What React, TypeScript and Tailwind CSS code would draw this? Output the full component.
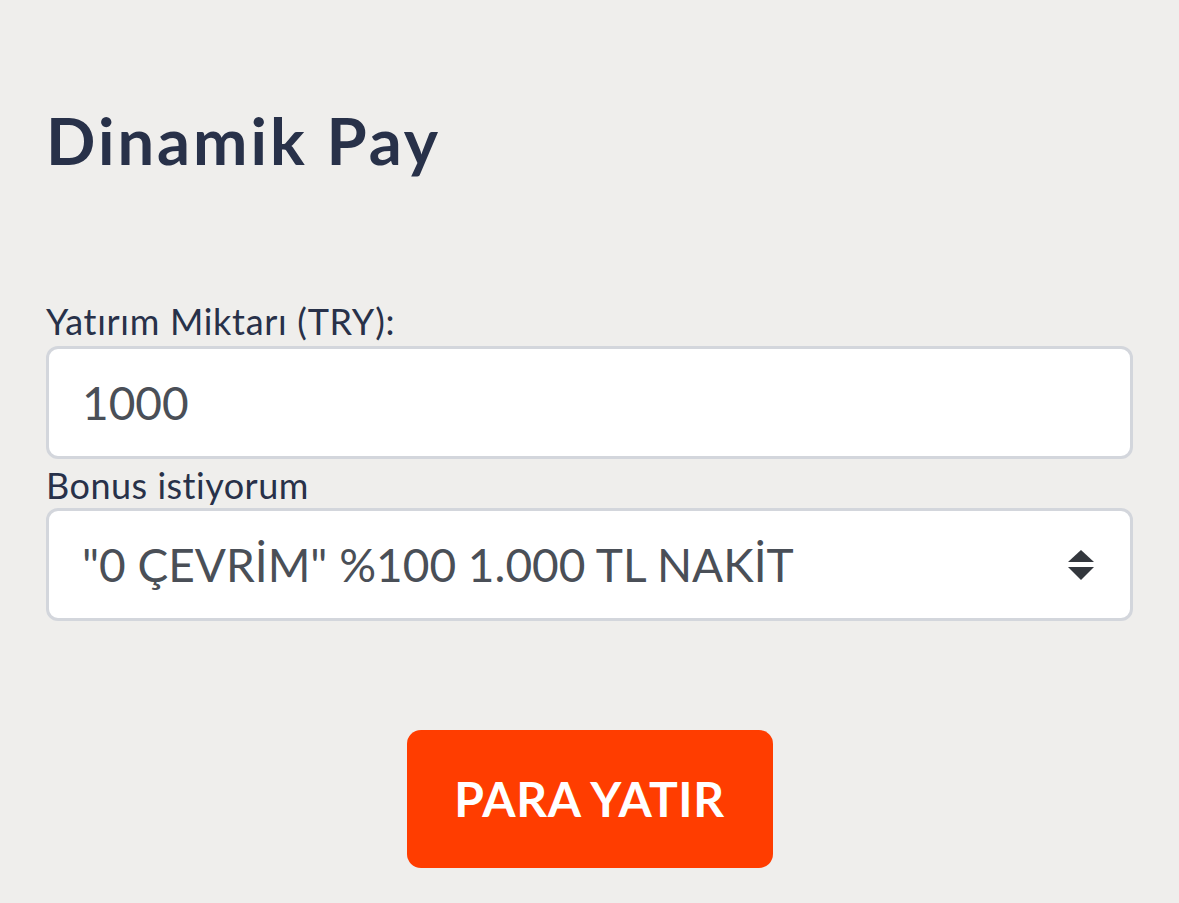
import React from 'react';

export default function App() {
  return (
    <div
      className="min-h-[903px] w-full bg-[#efeeec] px-[46px] pt-[100px] text-[#283149]"
      style={{ fontFamily: 'Lato, "Open Sans", sans-serif' }}
    >
      <h1 className="text-[65px] font-bold leading-[80px] tracking-[3px]">Dinamik Pay</h1>

      <form className="mt-[119px] flex flex-col">
        <label className="text-[36px] leading-[44px] tracking-[0.7px]">Yatırım Miktarı (TRY):</label>
        <div className="mt-[3px] flex h-[113px] items-center rounded-[12px] border-[3px] border-[#d3d6dc] bg-white px-[33px]">
          <span className="text-[46px] text-[#4a4f57]">1000</span>
        </div>

        <label className="mt-[5px] text-[36px] leading-[42px] tracking-[0.5px]">Bonus istiyorum</label>
        <div className="mt-[2px] flex h-[113px] items-center justify-between rounded-[12px] border-[3px] border-[#d3d6dc] bg-white pl-[33px] pr-[36px]">
          <span className="text-[46px] text-[#4a4f57]">"0 ÇEVRİM" %100 1.000 TL NAKİT</span>
          <svg width="26" height="30" viewBox="0 0 26 30" className="fill-[#33373d]">
            <path d="M13 0 L26 12 L0 12 Z" />
            <path d="M0 17 L26 17 L13 30 Z" />
          </svg>
        </div>

        <div className="mt-[109px] flex justify-center">
          <button
            type="button"
            className="h-[138px] w-[366px] rounded-[14px] bg-[#ff3d00] text-[48px] font-bold tracking-[0.6px] text-white"
          >
            PARA YATIR
          </button>
        </div>
      </form>
    </div>
  );
}
